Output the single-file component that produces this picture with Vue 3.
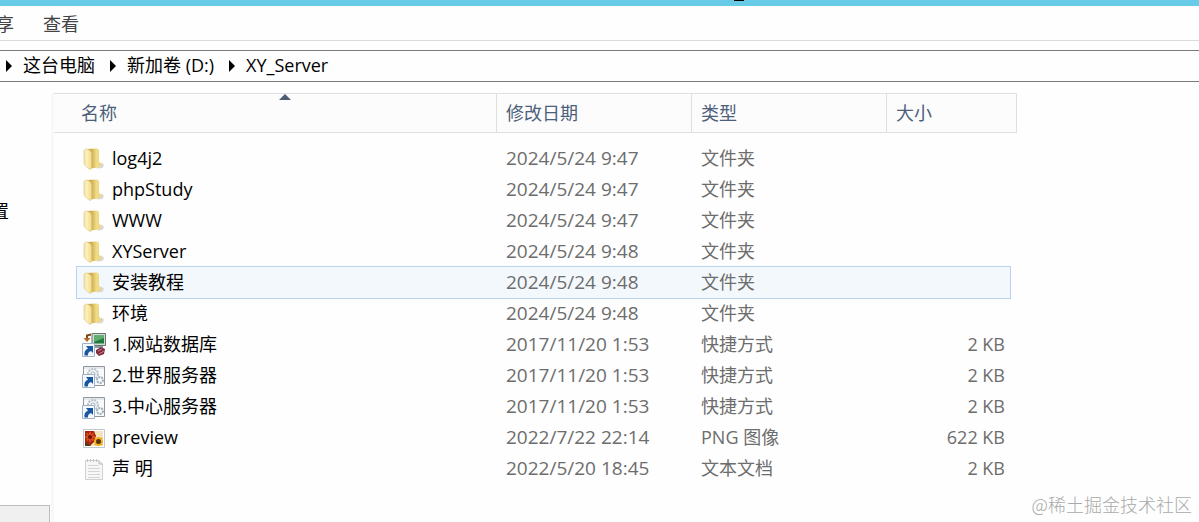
<template>
    <div class="explorer">
        <div class="title-bar"><span class="title-mark"></span></div>

        <nav class="ribbon">
            <button type="button" class="tab">享</button>
            <button type="button" class="tab">查看</button>
        </nav>

        <nav class="address">
            <template v-for="part in path" :key="part">
                <svg class="crumb-arrow" viewBox="0 0 6 12">
                    <path d="M0 0L6 6L0 12Z" fill="#000" />
                </svg>
                <a href="#" class="crumb">{{ part }}</a>
            </template>
        </nav>

        <div class="content">
            <aside class="side">
                <a href="#" class="side-item">置</a>
                <div class="side-scroll"></div>
            </aside>

            <main class="list">
                <table class="files">
                    <thead>
                        <tr>
                            <th v-for="(column, index) in columns" :key="column">
                                {{ column }}
                                <svg v-if="index === 0" class="sort-arrow" viewBox="0 0 12 6">
                                    <path d="M0 6L6 0L12 6Z" fill="#4c5d74" />
                                </svg>
                            </th>
                        </tr>
                    </thead>
                    <tbody>
                        <tr v-for="file in files" :key="file.name" :class="{ active: file.name === selected }"
                            @click="selected = file.name">
                            <td class="name">
                                <!-- Klasör -->
                                <svg v-if="file.icon === 'folder'" class="icon" viewBox="0 0 24 24">
                                    <defs>
                                        <linearGradient id="folder-front" x1="0" x2="1">
                                            <stop offset="0" stop-color="#f1e2a8" />
                                            <stop offset=".4" stop-color="#fcf0bb" />
                                            <stop offset="1" stop-color="#f1da86" />
                                        </linearGradient>
                                        <linearGradient id="folder-back" x1="0" x2="1">
                                            <stop offset=".3" stop-color="#cfab4d" />
                                            <stop offset=".65" stop-color="#f0dc88" />
                                            <stop offset="1" stop-color="#ecd47a" />
                                        </linearGradient>
                                    </defs>
                                    <path d="M15 19L20 15.500L22 18L20.500 21L15 21.500Z" fill="#d9d8d6" />
                                    <path d="M5 2L14.500 1.500Q17 1.500 17 4V14.500Q19 16 19.500 18L17 20.500L8 21.500Z"
                                        fill="url(#folder-back)" />
                                    <path d="M2.500 3Q3 1.500 5 2L8 3.500Q9.500 4.500 9.500 7V20.500Q9 23.500 7 22L3 18.500Q2 17.500 2 16V3.500Z"
                                        fill="url(#folder-front)" stroke="#dcc888" stroke-width=".6" />
                                </svg>
                                <!-- Veritabanı kısayolu -->
                                <svg v-else-if="file.icon === 'database'" class="icon" viewBox="0 0 24 24">
                                    <path d="M10 .5H23.500V12.500H10Z" fill="#d3dad5" stroke="#66746b" />
                                    <path d="M12 2.500H22V10.500H12Z" fill="#1f7a3d" />
                                    <path d="M12 2.500H22V5L12 9Z" fill="#5fae6e" />
                                    <path d="M12 13H21V15H12Z" fill="#8c9aa3" />
                                    <path d="M14 17L19 14L23 16L22 21L17 23L14 20Z" fill="#7d2c40" />
                                    <path d="M16 18L20 16M17 21L22 18" stroke="#d48489" />
                                    <path d="M9 1.500L5 2.500V6" fill="none" stroke="#7c4218" stroke-width="2" />
                                    <path d="M1.500 5H8.500L5 9Z" fill="#b4691e" />
                                    <path d="M.5 10.500H12.500V23.500H.5Z" fill="#f4f9fd" stroke="#9fb2c5" />
                                    <path d="M2.500 22.500Q1.500 17.500 6 15.500L4 13H11V20L9 18Q5.500 19 6 22.500Z" fill="#1a56a0" />
                                </svg>
                                <!-- Servis kısayolu -->
                                <svg v-else-if="file.icon === 'service'" class="icon" viewBox="0 0 24 24">
                                    <path d="M1.500 2.500H22.500V21.500H1.500Z" fill="#f8fafb" stroke="#8f979d" />
                                    <path d="M2 4H22" stroke="#d3d9de" />
                                    <circle cx="11" cy="10" r="5" fill="#edf1f3" stroke="#b9c2c9" stroke-width="2"
                                        stroke-dasharray="2 1" />
                                    <circle cx="11" cy="10" r="2" fill="#fff" stroke="#a9b4bc" />
                                    <circle cx="18" cy="16" r="3" fill="#edf2f5" stroke="#a3b0ba" stroke-width="2"
                                        stroke-dasharray="2 1" />
                                    <circle cx="18" cy="16" r="1" fill="#fff" />
                                    <path d="M.5 10.500H12.500V23.500H.5Z" fill="#f4f9fd" stroke="#9fb2c5" />
                                    <path d="M2.500 22.500Q1.500 17.500 6 15.500L4 13H11V20L9 18Q5.500 19 6 22.500Z" fill="#1a56a0" />
                                </svg>
                                <!-- Resim -->
                                <svg v-else-if="file.icon === 'image'" class="icon" viewBox="0 0 24 24">
                                    <path d="M1.500 3.500H22.500V21.500H1.500Z" fill="#fff" stroke="#c2c6c9" />
                                    <path d="M3 5H21V20H3Z" fill="#f3e3bd" />
                                    <path d="M3 5H12L14 10L12 16L8 20H3Z" fill="#a3260f" />
                                    <path d="M8 6V16M3 11H13M4.500 7.500L11.500 14.500M11.500 7.500L4.500 14.500" stroke="#dc4a1c"
                                        stroke-width="2" />
                                    <circle cx="8" cy="11" r="2" fill="#64140d" />
                                    <path d="M16.500 11V20M12 15.500H21M13 12L20 19M20 12L13 19" stroke="#f3ae1c"
                                        stroke-width="2.500" />
                                    <circle cx="16.500" cy="15.500" r="2.500" fill="#56330e" />
                                    <path d="M3 16L9 20H3Z" fill="#4a3b1f" />
                                </svg>
                                <!-- Metin belgesi -->
                                <svg v-else class="icon" viewBox="0 0 24 24">
                                    <path d="M3.500 3.500H17L20.500 7V22.500H3.500Z" fill="#f7f7f7" stroke="#cfd1d2" />
                                    <path d="M17 3.500V7H20.500" fill="#e4e6e7" stroke="#b9bcbe" />
                                    <path d="M5.500 2V5M8.500 2V5M11.500 2V5M14.500 2V5" stroke="#c3c6c8" />
                                    <path d="M6 8.500H16M6 11.500H18M6 14.500H18M6 17.500H18M6 20.500H18" stroke="#d3d5d6" />
                                </svg>
                                <span>{{ file.name }}</span>
                            </td>
                            <td class="date">{{ file.date }}</td>
                            <td>{{ file.type }}</td>
                            <td class="size">{{ file.size }}</td>
                        </tr>
                    </tbody>
                </table>
            </main>
        </div>

        <div class="watermark">@稀土掘金技术社区</div>
    </div>
</template>


<script setup>
import { ref } from 'vue';

const path = ['这台电脑', '新加卷 (D:)', 'XY_Server'];
const columns = ['名称', '修改日期', '类型', '大小'];
const selected = ref('安装教程');

const files = [
    { name: 'log4j2', date: '2024/5/24 9:47', type: '文件夹', size: '', icon: 'folder' },
    { name: 'phpStudy', date: '2024/5/24 9:47', type: '文件夹', size: '', icon: 'folder' },
    { name: 'WWW', date: '2024/5/24 9:47', type: '文件夹', size: '', icon: 'folder' },
    { name: 'XYServer', date: '2024/5/24 9:48', type: '文件夹', size: '', icon: 'folder' },
    { name: '安装教程', date: '2024/5/24 9:48', type: '文件夹', size: '', icon: 'folder' },
    { name: '环境', date: '2024/5/24 9:48', type: '文件夹', size: '', icon: 'folder' },
    { name: '1.网站数据库', date: '2017/11/20 1:53', type: '快捷方式', size: '2 KB', icon: 'database' },
    { name: '2.世界服务器', date: '2017/11/20 1:53', type: '快捷方式', size: '2 KB', icon: 'service' },
    { name: '3.中心服务器', date: '2017/11/20 1:53', type: '快捷方式', size: '2 KB', icon: 'service' },
    { name: 'preview', date: '2022/7/22 22:14', type: 'PNG 图像', size: '622 KB', icon: 'image' },
    { name: '声 明', date: '2022/5/20 18:45', type: '文本文档', size: '2 KB', icon: 'text' },
];
</script>

<style>
body {
    margin: 0;
    background-color: #fefefe;
}
</style>

<style scoped>
.explorer {
    position: relative;
    display: flex;
    flex-direction: column;
    min-height: 100vh;
    overflow: hidden;
    background-color: #fefefe;
    color: #000;
    font-family: "Open Sans", "Noto Sans CJK SC", sans-serif;
    font-size: 18px;
    line-height: 30px;
}

.title-bar {
    position: relative;
    height: 6px;
    background-color: #67cbe7;
}

.title-mark {
    position: absolute;
    top: 0;
    left: 734px;
    width: 10px;
    height: 1px;
    background-color: #000;
}

.ribbon {
    display: flex;
    gap: 29px;
    height: 34px;
    margin-left: -4px;
    border-bottom: 1px solid #dadbdc;
}

.tab {
    padding: 2px 0 0;
    border: none;
    background: none;
    color: #444;
    font: inherit;
    cursor: pointer;
}

.address {
    display: flex;
    align-items: center;
    gap: 11px;
    height: 30px;
    margin-top: 9px;
    padding-left: 6px;
    border-top: 1px solid #7b7b7b;
    border-bottom: 1px solid #7b7b7b;
}

.crumb-arrow {
    width: 6px;
    height: 12px;
}

.crumb {
    padding-bottom: 2px;
    color: #000;
    text-decoration: none;
    white-space: nowrap;
}

.crumb:not(:last-child) {
    margin-right: 4px;
}

.content {
    display: flex;
    flex: 1;
    padding-top: 11px;
}

.side {
    display: flex;
    flex-direction: column;
    justify-content: space-between;
    width: 51px;
    border-right: 3px solid #f8f8f8;
}

.side-item {
    margin: 103px 0 0 -9px;
    color: #000;
    text-decoration: none;
}

.side-scroll {
    height: 16px;
    margin-right: 1px;
    border-top: 1px solid #bcbcbc;
    border-right: 1px solid #bcbcbc;
    background-color: #f0f0f0;
}

.list {
    flex: 1;
}

.files,
.files thead,
.files tbody {
    display: block;
}

.files {
    width: 963px;
}

.files tr {
    display: grid;
    grid-template-columns: 1fr 195px 195px 130px;
}

.files thead tr {
    border: 1px solid #dedfe1;
    border-left: none;
    background-color: #fcfcfd;
}

.files th {
    position: relative;
    padding: 4px 9px;
    border-left: 1px solid #dedfe1;
    color: #4c607a;
    font-weight: 400;
    line-height: 30px;
    text-align: left;
}

.files th:first-child {
    padding-left: 27px;
    border-left: none;
}

.sort-arrow {
    position: absolute;
    top: 0;
    left: 51%;
    width: 12px;
    height: 6px;
    /* Sıralama oku sütunun ortasında */
}

.files tbody {
    padding: 10px 7px 0 23px;
}

.files tbody tr {
    grid-template-columns: 1fr 195px 195px 124px;
    height: 31px;
}

.files tbody tr:hover {
    background-color: #f4f9fe;
}

.files tbody tr.active {
    background-color: #f3f8fd;
    outline: 1px solid #b9d3ef;
}

.files td {
    padding: 0 5px 0 10px;
    color: #6d6d6d;
    white-space: nowrap;
}

.files td.name {
    display: flex;
    align-items: center;
    gap: 6px;
    padding-left: 5px;
    color: #000;
    line-height: 28px;
}

.files td.name span {
    padding-bottom: 2px;
}

.files td.date {
    font-size: 19px;
}

.files td.size {
    text-align: right;
}

.icon {
    width: 24px;
    height: 24px;
}

.watermark {
    position: absolute;
    right: 7px;
    bottom: 3px;
    color: #a9a9a9;
    font-family: "Noto Sans CJK SC", sans-serif;
    font-weight: 300;
}
</style>
